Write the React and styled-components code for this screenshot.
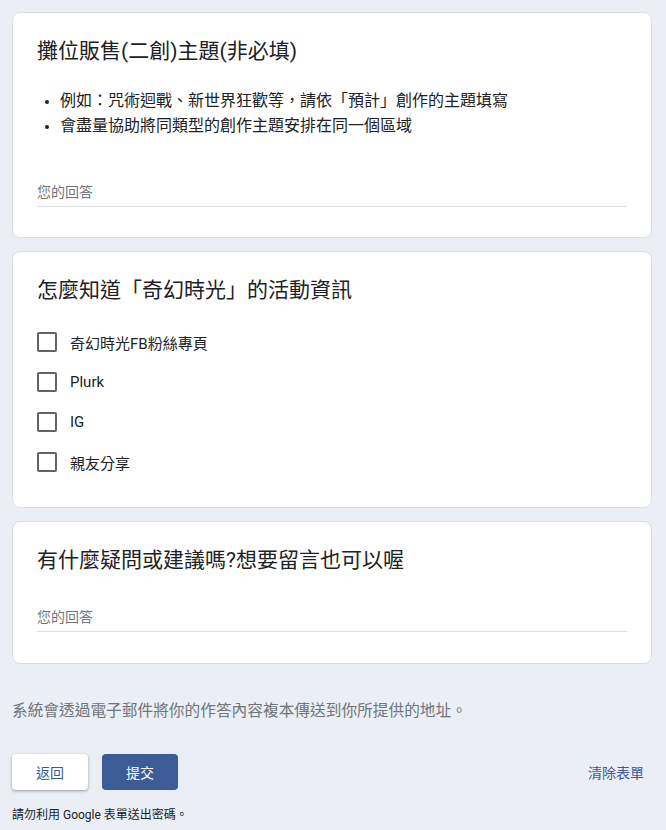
import styled, { createGlobalStyle } from "styled-components";

const GlobalStyle = createGlobalStyle`
  body {
    margin: 0;
    background: #ebeef5;
    font-family: Roboto, "Noto Sans CJK TC", "Noto Sans CJK SC", sans-serif;
    color: #202124;
  }
`;

const Page = styled.div`
  padding: 12px 14px 12px 12px;
  display: flex;
  flex-direction: column;
  gap: 13px;
`;

const Card = styled.section`
  background: #fff;
  border: 1px solid #dadce0;
  border-radius: 8px;
  padding: 24px 24px ${({ $bottom }) => $bottom || 24}px;
`;

const Title = styled.h2`
  margin: 0;
  font-size: 21px;
  font-weight: 400;
  line-height: 28px;
  color: #202124;
`;

const Hints = styled.ul`
  margin: 23px 0 0;
  padding-left: 23px;
  font-size: 16px;
  line-height: 25px;
  color: #202124;

  li::marker {
    font-size: 13px;
  }
`;

const Answer = styled.div`
  margin-top: ${({ $top }) => $top}px;
  width: 590px;
  padding-bottom: 4px;
  border-bottom: 1px solid #e0e0e0;
  font-size: 14px;
  line-height: 20px;
  color: #70757a;
`;

const Options = styled.div`
  margin-top: 18px;
  display: flex;
  flex-direction: column;
`;

const Option = styled.label`
  display: flex;
  align-items: center;
  height: 40px;
  gap: 13px;
  font-size: 15px;
  color: #202124;
`;

const Box = styled.span`
  width: 16px;
  height: 16px;
  border: 2px solid #5f6368;
  border-radius: 2px;
  flex: none;
`;

const Footer = styled.div`
  display: flex;
  flex-direction: column;
`;

const Notice = styled.p`
  margin: 22px 0 0;
  font-size: 15.7px;
  line-height: 24px;
  color: #70757a;
`;

const Actions = styled.div`
  margin-top: 31px;
  display: flex;
  align-items: center;
  gap: 14px;
`;

const Button = styled.button`
  width: 76px;
  height: 36px;
  border-radius: 4px;
  font-family: inherit;
  font-size: 14px;
  font-weight: 400;
  cursor: pointer;
  border: none;
  background: ${({ $primary }) => ($primary ? "#3d5b96" : "#fff")};
  color: ${({ $primary }) => ($primary ? "#fff" : "#3d5b96")};
  box-shadow: ${({ $primary }) =>
    $primary ? "none" : "0 1px 2px rgba(60,64,67,0.3), 0 1px 3px 1px rgba(60,64,67,0.15)"};
`;

const Clear = styled.button`
  margin-left: auto;
  margin-right: 8px;
  border: none;
  background: none;
  font-family: inherit;
  font-size: 14px;
  font-weight: 400;
  color: #3d5b96;
  padding: 0;
`;

const Warning = styled.p`
  margin: 16px 0 0;
  font-size: 12px;
  line-height: 18px;
  color: #202124;
`;

const sources = ["奇幻時光FB粉絲專頁", "Plurk", "IG", "親友分享"];

export default function App() {
  return (
    <>
      <GlobalStyle />
      <Page>
        <Card $bottom={30}>
          <Title>攤位販售(二創)主題(非必填)</Title>
          <Hints>
            <li>例如：咒術迴戰、新世界狂歡等，請依「預計」創作的主題填寫</li>
            <li>會盡量協助將同類型的創作主題安排在同一個區域</li>
          </Hints>
          <Answer $top={44}>您的回答</Answer>
        </Card>

        <Card $bottom={25}>
          <Title>怎麼知道「奇幻時光」的活動資訊</Title>
          <Options>
            {sources.map((s) => (
              <Option key={s}>
                <Box />
                {s}
              </Option>
            ))}
          </Options>
        </Card>

        <Card $bottom={31}>
          <Title>有什麼疑問或建議嗎?想要留言也可以喔</Title>
          <Answer $top={33}>您的回答</Answer>
        </Card>

        <Footer>
          <Notice>系統會透過電子郵件將你的作答內容複本傳送到你所提供的地址。</Notice>
          <Actions>
            <Button>返回</Button>
            <Button $primary>提交</Button>
            <Clear>清除表單</Clear>
          </Actions>
          <Warning>請勿利用 Google 表單送出密碼。</Warning>
        </Footer>
      </Page>
    </>
  );
}
